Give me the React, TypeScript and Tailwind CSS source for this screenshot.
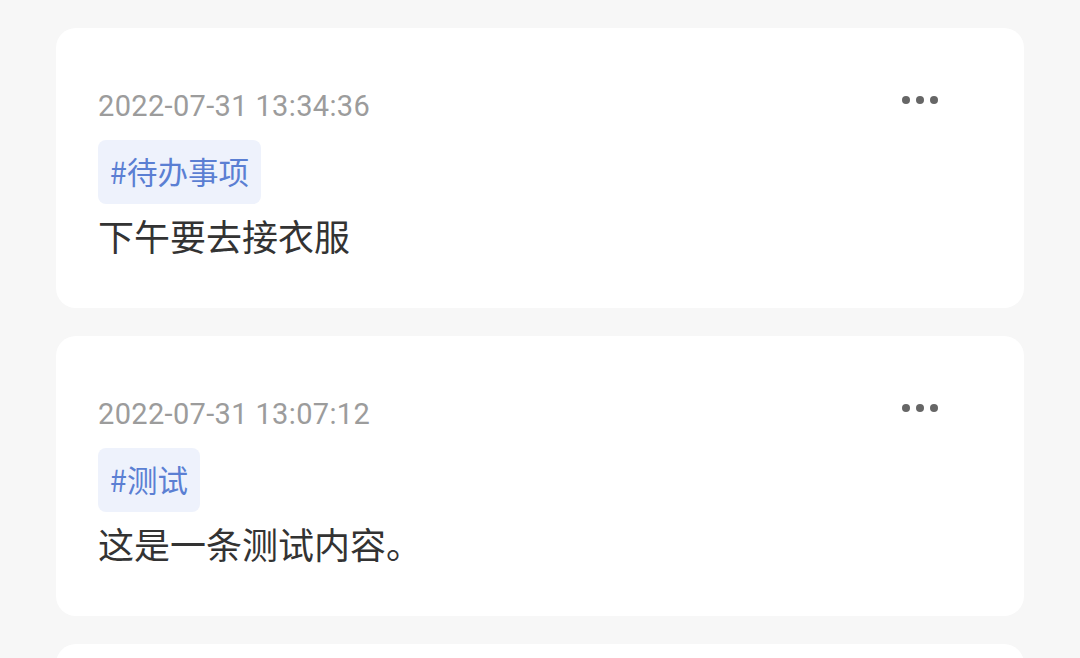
import React from "react";

type Note = { time: string; tag: string; content: string };

const notes: Note[] = [
  { time: "2022-07-31 13:34:36", tag: "#待办事项", content: "下午要去接衣服" },
  { time: "2022-07-31 13:07:12", tag: "#测试", content: "这是一条测试内容。" },
];

function Dots() {
  return (
    <div className="flex items-center gap-[6px] mt-[7px]">
      <span className="block w-[8px] h-[8px] rounded-full bg-[#666666]" />
      <span className="block w-[8px] h-[8px] rounded-full bg-[#666666]" />
      <span className="block w-[8px] h-[8px] rounded-full bg-[#666666]" />
    </div>
  );
}

function Card({ note }: { note: Note }) {
  return (
    <div className="bg-white rounded-[20px] pl-[42px] pr-[86px] pt-[61px] pb-[49px]">
      <div className="flex items-start justify-between">
        <div
          className="text-[29px] leading-[34px] tracking-[0.35px] text-[#9c9c9c]"
          style={{ fontFamily: "Roboto, 'Noto Sans', sans-serif" }}
        >
          {note.time}
        </div>
        <Dots />
      </div>
      <div className="mt-[17px] flex">
        <div
          className="h-[64px] px-[12px] flex items-center rounded-[8px] bg-[#eef2fc] text-[#5b7fd3] text-[30.5px]"
          style={{ fontFamily: "'Noto Sans CJK SC', 'Noto Sans', sans-serif" }}
        >
          {note.tag}
        </div>
      </div>
      <div
        className="mt-[7px] text-[36px] leading-[48px] text-[#333333]"
        style={{ fontFamily: "'Noto Sans CJK SC', 'Noto Sans', sans-serif" }}
      >
        {note.content}
      </div>
    </div>
  );
}

export default function App() {
  return (
    <div className="w-[1080px] h-[658px] overflow-hidden bg-[#f7f7f7] px-[56px] pt-[28px] flex flex-col gap-[28px]">
      {notes.map((n, i) => (
        <Card key={i} note={n} />
      ))}
      <div className="bg-white rounded-[20px] h-[200px] shrink-0" />
    </div>
  );
}
